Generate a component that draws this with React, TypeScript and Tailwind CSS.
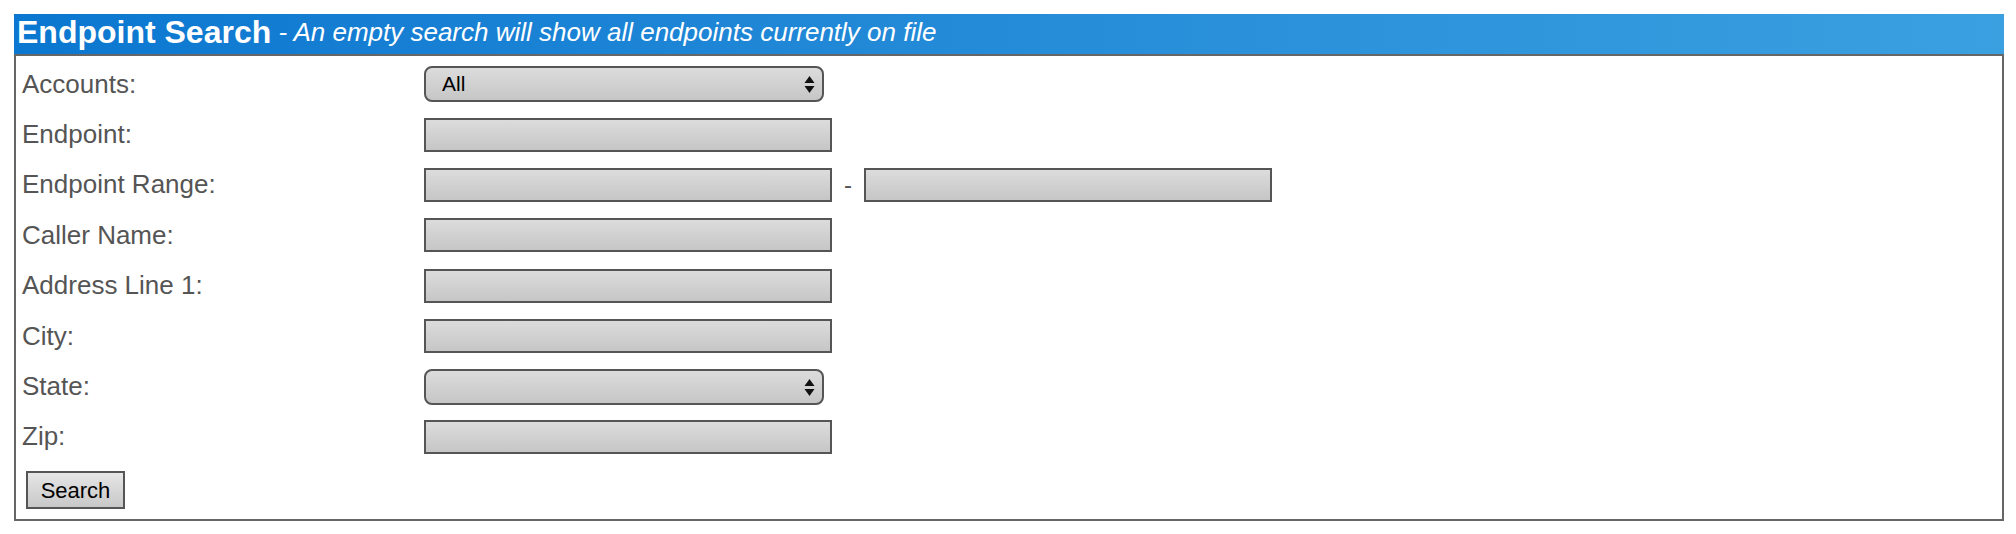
import React from 'react';

const fieldClass =
  'appearance-none h-[34px] w-[408px] border-2 border-[#555] bg-gradient-to-b from-[#dcdcdc] to-[#c6c6c6] outline-none';

const SelectBox: React.FC<{ value?: string }> = ({ value }) => (
  <div className="relative w-[400px] h-[36px]">
    <select
      defaultValue={value ?? ''}
      className="appearance-none w-full h-full rounded-[8px] border-2 border-[#555] bg-gradient-to-b from-[#dcdcdc] to-[#c6c6c6] pl-[16px] text-[21px] text-black outline-none"
    >
      <option value={value ?? ''}>{value ?? ''}</option>
    </select>
    <svg
      className="absolute right-[9px] top-[10px] pointer-events-none"
      width="11"
      height="17"
      viewBox="0 0 11 17"
    >
      <path d="M5.5 0 L10.5 7 L0.5 7 Z" fill="#111" />
      <path d="M0.5 10 L10.5 10 L5.5 17 Z" fill="#111" />
    </svg>
  </div>
);

const Row: React.FC<{ label: string; children: React.ReactNode }> = ({ label, children }) => (
  <div className="grid grid-cols-[402px_1fr] h-[50.4px] items-center">
    <div className="text-[26px] text-[#555]">{label}</div>
    <div className="flex items-center">{children}</div>
  </div>
);

export default function App() {
  return (
    <div
      className="min-h-[534px] bg-white pt-[14px] pl-[14px]"
      style={{ fontFamily: '"Liberation Sans", Arial, sans-serif' }}
    >
      <div className="w-[1990px]">
        <div className="h-[40px] flex items-center pb-[4px] pl-[3px] bg-gradient-to-r from-[#0a77d0] to-[#3aa0e0] text-white whitespace-nowrap">
          <span className="text-[32px] font-bold">Endpoint Search</span>
          <span className="text-[26px] italic">&nbsp;- An empty search will show all endpoints currently on file</span>
        </div>
        <div className="border-2 border-[#666] pl-[6px] pt-[3px] pb-[10px]">
          <Row label="Accounts:">
            <SelectBox value="All" />
          </Row>
          <Row label="Endpoint:">
            <input className={fieldClass} />
          </Row>
          <Row label="Endpoint Range:">
            <input className={fieldClass} />
            <span className="mx-[12px] text-[24px] text-[#555]">-</span>
            <input className={fieldClass} />
          </Row>
          <Row label="Caller Name:">
            <input className={fieldClass} />
          </Row>
          <Row label="Address Line 1:">
            <input className={fieldClass} />
          </Row>
          <Row label="City:">
            <input className={fieldClass} />
          </Row>
          <Row label="State:">
            <SelectBox />
          </Row>
          <Row label="Zip:">
            <input className={fieldClass} />
          </Row>
          <div className="pt-[9px] pl-[4px]">
            <button className="h-[38px] w-[99px] border-2 border-[#555] bg-gradient-to-b from-[#e6e6e6] to-[#c8c8c8] text-[22px] text-black">
              Search
            </button>
          </div>
        </div>
      </div>
    </div>
  );
}
